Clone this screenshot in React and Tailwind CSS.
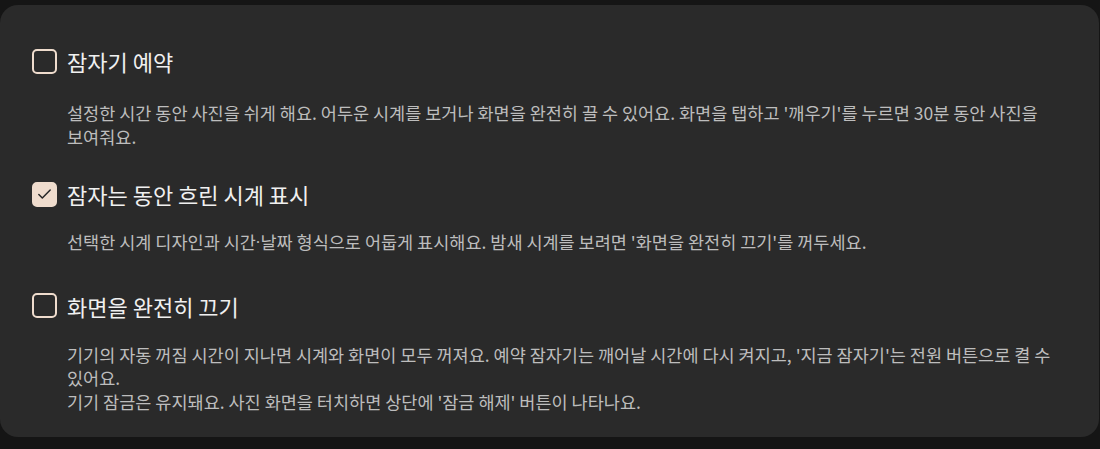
import { useState } from 'react'

const OPTIONS = [
  {
    id: 'schedule',
    title: '잠자기 예약',
    desc: [
      <>설정한 시간 동안 사진을 쉬게 해요. 어두운 시계를 보거나 화면을 완전히 끌 수 있어요. 화면을 탭하고 '깨우기'를 누르면 30분 동안 사진을 보여줘요.</>,
    ],
    descGap: 'mt-[16px]',
    rowGap: '',
    checked: false,
  },
  {
    id: 'dim-clock',
    title: '잠자는 동안 흐린 시계 표시',
    desc: [
      <>
        선택한 시계 디자인과 시간<span className="font-['Roboto',sans-serif]">·</span>날짜 형식으로 어둡게 표시해요. 밤새
        시계를 보려면 '화면을 완전히 끄기'를 꺼두세요.
      </>,
    ],
    descGap: 'mt-[12px]',
    rowGap: 'mt-[22px]',
    checked: true,
  },
  {
    id: 'screen-off',
    title: '화면을 완전히 끄기',
    desc: [
      <>기기의 자동 꺼짐 시간이 지나면 시계와 화면이 모두 꺼져요. 예약 잠자기는 깨어날 시간에 다시 켜지고, '지금 잠자기'는 전원 버튼으로 켤 수 있어요.</>,
      <>기기 잠금은 유지돼요. 사진 화면을 터치하면 상단에 '잠금 해제' 버튼이 나타나요.</>,
    ],
    descGap: 'mt-[13px]',
    rowGap: 'mt-[26px]',
    checked: false,
  },
]

function Checkbox({ checked, onChange }) {
  return (
    <button
      type="button"
      role="checkbox"
      aria-checked={checked}
      onClick={onChange}
      className={
        checked
          ? 'w-[25px] h-[25px] shrink-0 rounded-[5px] bg-[#efdccd] border-2 border-[#efdccd] flex items-center justify-center'
          : 'w-[25px] h-[25px] shrink-0 rounded-[5px] bg-transparent border-2 border-[#efdccd] flex items-center justify-center'
      }
    >
      {checked && (
        <svg width="22" height="22" viewBox="0 0 24 24" fill="none">
          <path d="M5.5 12.5l4 4L18.5 7.5" stroke="#262626" strokeWidth="1.7" strokeLinecap="round" strokeLinejoin="round" />
        </svg>
      )}
    </button>
  )
}

export default function App() {
  const [state, setState] = useState(
    OPTIONS.reduce((acc, o) => ({ ...acc, [o.id]: o.checked }), {})
  )

  return (
    <div
      className="min-h-[449px] bg-[#151515] pt-[5px] pb-[12px]"
      style={{ fontFamily: '"Noto Sans CJK KR", "Noto Sans", sans-serif' }}
    >
      <div className="w-[1099px] rounded-[18px] bg-[#2a2a2a] pl-[32px] pr-[30px] pt-[32px] pb-[24px]">
        {OPTIONS.map(opt => (
          <div key={opt.id} className={opt.rowGap}>
            <label className="flex items-center h-[48px] gap-[10px] cursor-pointer">
              <Checkbox
                checked={state[opt.id]}
                onChange={() => setState(s => ({ ...s, [opt.id]: !s[opt.id] }))}
              />
              <span className="text-[22px] text-[#f0f0f0] leading-none">{opt.title}</span>
            </label>
            <div className={`${opt.descGap} pl-[35px] text-[17.5px] leading-[23.5px] text-[#bdbdbd] break-keep`}>
              {opt.desc.map((line, i) => (
                <p key={i}>{line}</p>
              ))}
            </div>
          </div>
        ))}
      </div>
    </div>
  )
}
